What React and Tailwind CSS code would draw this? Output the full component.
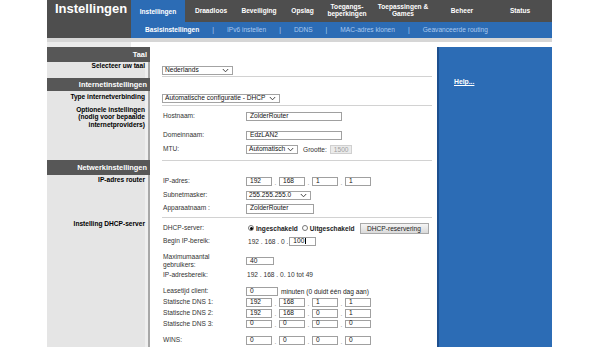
import React from "react";

const tabs = [
  { label: "Instellingen", w: "w-[54px]", active: true },
  { label: "Draadloos", w: "w-[52px]" },
  { label: "Beveiliging", w: "w-[44px]" },
  { label: "Opslag", w: "w-[43px]" },
  { label: ["Toegangs-", "beperkingen"], w: "w-[46px]" },
  { label: ["Toepassingen &", "Games"], w: "w-[66px]" },
  { label: "Beheer", w: "w-[52px]" },
  { label: "Status", w: "w-[64px]" },
];

const subtabs = ["IPv6 instellen", "DDNS", "MAC-adres klonen", "Geavanceerde routing"];

function Chevron() {
  return (
    <svg width="7" height="5" viewBox="0 0 7 5" className="shrink-0">
      <path d="M0.8 1 L3.5 3.8 L6.2 1" fill="none" stroke="#333" strokeWidth="0.9" />
    </svg>
  );
}

function Select({ className, children }) {
  return (
    <div className={`flex h-[9px] items-center justify-between border border-[#a3a3a3] bg-white pl-[2px] pr-[3px] text-[6.6px] leading-none text-[#111] ${className}`}>
      <span className="whitespace-nowrap">{children}</span>
      <Chevron />
    </div>
  );
}

function Input({ className, children }) {
  return (
    <div className={`flex items-center border border-[#a0a0a0] bg-white pl-[3px] text-[6.6px] leading-none text-[#111] ${className}`}>
      {children}
    </div>
  );
}

function Row({ h, label, children }) {
  return (
    <div className={`flex items-center ${h}`}>
      <div className="w-[84px] shrink-0 whitespace-nowrap pl-[1px] text-[6.6px] leading-[8.5px] text-[#333]">{label}</div>
      <div className="flex items-center whitespace-nowrap">{children}</div>
    </div>
  );
}

function Octets({ values, h = "h-[9px]" }) {
  return (
    <div className="flex items-center">
      {values.map((v, i) => (
        <React.Fragment key={i}>
          {i > 0 && <span className="flex w-[7px] justify-center pt-[3px] text-[6.6px] leading-none text-[#888]">.</span>}
          <Input className={`w-[26px] ${h}`}>{v}</Input>
        </React.Fragment>
      ))}
    </div>
  );
}

function Rule() {
  return <div className="h-px bg-[#d2d2d2]" />;
}

function Radio({ on }) {
  return (
    <span className="flex h-[6px] w-[6px] items-center justify-center rounded-full border border-[#777] bg-white">
      {on && <span className="h-[3px] w-[3px] rounded-full bg-black" />}
    </span>
  );
}

export default function App() {
  return (
    <div className="h-[347px] w-[608px] overflow-hidden bg-white pl-[47px] font-['Liberation_Sans',Arial,sans-serif]">
      <div className="w-[505px]">
        {/* header */}
        <div className="flex h-[38px]">
          <div className="w-[84px] bg-[#4e4e4e] pl-[8px] pt-[1px] text-[13px] font-bold leading-[16px] text-white">
            Instellingen
          </div>
          <div className="w-[421px]">
            <div className="flex h-[22px] bg-[#4e4e4e]">
              {tabs.map((t, i) => (
                <div
                  key={i}
                  className={`flex ${t.w} items-center justify-center text-center text-[6.6px] font-bold leading-[6.8px] text-white ${t.active ? "bg-[#2c6cb5] pt-[2px]" : ""}`}
                >
                  {Array.isArray(t.label) ? (
                    <span>
                      {t.label[0]}
                      <br />
                      {t.label[1]}
                    </span>
                  ) : (
                    t.label
                  )}
                </div>
              ))}
            </div>
            <div className="flex h-[16px] items-center gap-[13px] bg-[#2c6cb5] pl-[14px] text-[6.6px] leading-none">
              <span className="font-bold text-white">Basisinstellingen</span>
              {subtabs.map((s) => (
                <React.Fragment key={s}>
                  <span className="text-[#b3d0f2]">|</span>
                  <span className="text-[#a9c8ee]">{s}</span>
                </React.Fragment>
              ))}
            </div>
          </div>
        </div>
        <div className="h-[4px] bg-[#d6d6d6]" />
        <div className="flex h-[5px]">
          <div className="w-[84px] bg-[#ebebeb]" />
          <div className="flex-1 bg-white" />
        </div>

        {/* body */}
        <div className="flex h-[300px]">
          {/* left column */}
          <div className="w-[103px] shrink-0 bg-[#e5e5e5] text-right shadow-[inset_-2px_0_0_#a8a8a8,inset_-5px_0_0_#efefef]">
            <div className="h-[31px]">
              <div className="flex h-[15px] items-center justify-end bg-[#575757] pr-[3px] text-[7.4px] font-bold text-white">Taal</div>
              <div className="pr-[5px] text-[6.6px] font-bold leading-[8px] text-black">Selecteer uw taal</div>
            </div>
            <div className="h-[82px]">
              <div className="flex h-[13px] items-center justify-end bg-[#575757] pr-[3px] text-[7.4px] font-bold text-white">
                Internetinstellingen
              </div>
              <div className="pr-[5px] pt-[2px] text-[6.6px] font-bold leading-[8px] text-black">Type internetverbinding</div>
              <div className="mt-[5px] pr-[5px] text-[6.6px] font-bold leading-[7.3px] text-black">
                Optionele instellingen
                <br />
                (nodig voor bepaalde
                <br />
                internetproviders)
              </div>
            </div>
            <div>
              <div className="flex h-[15px] items-center justify-end bg-[#575757] pr-[3px] text-[7.4px] font-bold text-white">
                Netwerkinstellingen
              </div>
              <div className="mt-[1px] pr-[5px] text-[6.6px] font-bold leading-[8px] text-black">IP-adres router</div>
              <div className="mt-[36px] pr-[5px] text-[6.6px] font-bold leading-[8px] text-black">Instelling DHCP-server</div>
            </div>
          </div>

          {/* content */}
          <div className="w-[287px] shrink-0 bg-white pl-[12px] pr-[5px]">
            <div className="h-[18.5px]" />
            <Select className="w-[71px]">Nederlands</Select>
            <div className="h-[1px]" />
            <Rule />
            <div className="h-[17.5px]" />
            <Select className="w-[118px]">Automatische configuratie - DHCP</Select>
            <div className="h-[1.5px]" />
            <Rule />
            <Row h="h-[22px]" label="Hostnaam:">
              <Input className="h-[9px] w-[96px]">ZolderRouter</Input>
            </Row>
            <Row h="h-[16px]" label="Domeinnaam:">
              <Input className="h-[9px] w-[96px]">EdzLAN2</Input>
            </Row>
            <Row h="h-[12px]" label="MTU:">
              <Select className="w-[52px]">Automatisch</Select>
              <span className="ml-[5px] text-[6.6px] text-[#333]">Grootte:</span>
              <div className="ml-[3px] flex h-[9px] w-[22px] items-center border border-[#d0d0d0] bg-[#ebebeb] pl-[3px] text-[6.6px] text-[#a0a0a0]">
                1500
              </div>
            </Row>
            <div className="h-[4px]" />
            <Rule />
            <div className="h-[13px]" />
            <Row h="h-[16px]" label="IP-adres:">
              <Octets values={["192", "168", "1", "1"]} h="h-[9.5px]" />
            </Row>
            <Row h="h-[12px]" label="Subnetmasker:">
              <Select className="w-[65px]">255.255.255.0</Select>
            </Row>
            <Row h="h-[14px]" label="Apparaatnaam :">
              <Input className="h-[10px] w-[68px]">ZolderRouter</Input>
            </Row>
            <div className="h-[1.5px]" />
            <Rule />
            <div className="h-[3px]" />
            <Row h="h-[15px]" label="DHCP-server:">
              <div className="flex items-center text-[6.6px] font-bold text-[#222]">
                <span className="ml-[2px]">
                  <Radio on />
                </span>
                <span className="ml-[2px]">Ingeschakeld</span>
                <span className="ml-[4px]">
                  <Radio />
                </span>
                <span className="ml-[2px]">Uitgeschakeld</span>
              </div>
              <div className="ml-[5px] flex h-[11px] w-[69px] items-center justify-center border border-[#a9a9a9] bg-gradient-to-b from-[#f5f5f5] to-[#dadada] text-[6.6px] text-[#222]">
                DHCP-reservering
              </div>
            </Row>
            <Row h="h-[11px]" label="Begin IP-bereik:">
              <span className="ml-[2px] mr-[1px] text-[6.6px] text-[#333]">192 . 168 . 0 .</span>
              <Input className="h-[9px] w-[27px] border-[#444]">
                100<span className="ml-[0.5px] h-[6px] w-px bg-black" />
              </Input>
            </Row>
            <div className="h-[4px]" />
            <Row
              h="h-[20px]"
              label={
                <>
                  Maximumaantal
                  <br />
                  gebruikers:
                </>
              }
            >
              <Input className="h-[8.5px] w-[28px]">40</Input>
            </Row>
            <Row h="h-[8px]" label="IP-adresbereik:">
              <span className="ml-[1px] text-[6.6px] text-[#333]">192 . 168 . 0. 10 tot 49</span>
            </Row>
            <div className="h-[7px]" />
            <Row h="h-[11px]" label="Leasetijd client:">
              <Input className="h-[8.5px] w-[32px]">0</Input>
              <span className="ml-[3px] text-[6.6px] text-[#222]">minuten (0 duidt één dag aan)</span>
            </Row>
            <Row h="h-[11px]" label="Statische DNS 1:">
              <Octets values={["192", "168", "1", "1"]} h="h-[8.5px]" />
            </Row>
            <Row h="h-[10.5px]" label="Statische DNS 2:">
              <Octets values={["192", "168", "0", "1"]} h="h-[8.5px]" />
            </Row>
            <Row h="h-[10.5px]" label="Statische DNS 3:">
              <Octets values={["0", "0", "0", "0"]} h="h-[8.5px]" />
            </Row>
            <div className="h-[6px]" />
            <Row h="h-[11px]" label="WINS:">
              <Octets values={["0", "0", "0", "0"]} h="h-[8.5px]" />
            </Row>
          </div>

          {/* help */}
          <div className="w-[115px] shrink-0 bg-[#2c6cb5] pl-[17px] pt-[20px] shadow-[inset_2px_0_0_#1d4f8e]">
            <span className="text-[6.8px] font-bold text-white underline">Help...</span>
          </div>
        </div>
      </div>
    </div>
  );
}
